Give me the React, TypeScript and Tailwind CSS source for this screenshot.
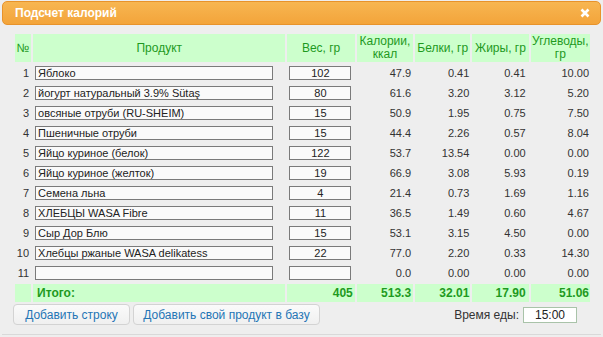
import React from "react";

const rows = [
  { n: 1, name: "Яблоко", w: "102", kcal: "47.9", p: "0.41", f: "0.41", c: "10.00" },
  { n: 2, name: "йогурт натуральный 3.9% Sütaş", w: "80", kcal: "61.6", p: "3.20", f: "3.12", c: "5.20" },
  { n: 3, name: "овсяные отруби (RU-SHEIM)", w: "15", kcal: "50.9", p: "1.95", f: "0.75", c: "7.50" },
  { n: 4, name: "Пшеничные отруби", w: "15", kcal: "44.4", p: "2.26", f: "0.57", c: "8.04" },
  { n: 5, name: "Яйцо куриное (белок)", w: "122", kcal: "53.7", p: "13.54", f: "0.00", c: "0.00" },
  { n: 6, name: "Яйцо куриное (желток)", w: "19", kcal: "66.9", p: "3.08", f: "5.93", c: "0.19" },
  { n: 7, name: "Семена льна", w: "4", kcal: "21.4", p: "0.73", f: "1.69", c: "1.16" },
  { n: 8, name: "ХЛЕБЦЫ WASA Fibre", w: "11", kcal: "36.5", p: "1.49", f: "0.60", c: "4.67" },
  { n: 9, name: "Сыр Дор Блю", w: "15", kcal: "53.1", p: "3.15", f: "4.50", c: "0.00" },
  { n: 10, name: "Хлебцы ржаные WASA delikatess", w: "22", kcal: "77.0", p: "2.20", f: "0.33", c: "14.30" },
  { n: 11, name: "", w: "", kcal: "0.0", p: "0.00", f: "0.00", c: "0.00" },
];

const head = "bg-[#ccffcc] text-[#1e9a1e] text-[12px] leading-[13px] font-normal text-center p-0";

export default function App() {
  return (
    <div
      className="w-[603px] h-[337px] bg-[#eeeeee] relative overflow-hidden text-[#333]"
      style={{ fontFamily: '"Liberation Sans", Arial, sans-serif' }}
    >
      <div className="pt-px px-[2px]">
        <div className="h-[24px] rounded-[5px] border border-[#e8932b] bg-gradient-to-b from-[#f7b651] to-[#f3a43a] flex items-center justify-between pl-[12px] pr-[10px]">
          <span className="text-white font-bold text-[12px]">Подсчет калорий</span>
          <svg width="10" height="10" viewBox="0 0 10 10">
            <path d="M1.5 1.5 L8.5 8.5 M8.5 1.5 L1.5 8.5" stroke="#fff" strokeWidth="2.6" strokeLinecap="butt" />
          </svg>
        </div>
      </div>
      <div className="pl-[13px] pt-[7px]">
        <table className="border-separate border-spacing-[2px] table-fixed text-[11px]" style={{ width: 579 }}>
          <colgroup>
            <col style={{ width: 16 }} />
            <col style={{ width: 251 }} />
            <col style={{ width: 67 }} />
            <col style={{ width: 56 }} />
            <col style={{ width: 55 }} />
            <col style={{ width: 56 }} />
            <col style={{ width: 59 }} />
          </colgroup>
          <thead>
            <tr className="h-[28px]">
              <th className={head}>№</th>
              <th className={head}>Продукт</th>
              <th className={head}>Вес, гр</th>
              <th className={head}>Калории,<br />ккал</th>
              <th className={head}>Белки, гр</th>
              <th className={head}>Жиры, гр</th>
              <th className={head}>Углеводы,<br />гр</th>
            </tr>
          </thead>
          <tbody>
            {rows.map((r) => (
              <tr key={r.n} className="h-[18px]">
                <td className="p-0 pr-[2px] text-right text-[#333]">{r.n}</td>
                <td className="p-0 pl-[2px]">
                  <div className="h-[14px] w-[238px] border border-[#7a7a7a] bg-[#fafafa] text-[11px] leading-[12px] pl-[2px] text-[#222] whitespace-nowrap overflow-hidden">
                    {r.name}
                  </div>
                </td>
                <td className="p-0 pl-[2px]">
                  <div className="h-[14px] w-[62px] border border-[#7a7a7a] bg-[#fafafa] text-[11px] leading-[12px] text-center text-[#222]">
                    {r.w}
                  </div>
                </td>
                <td className="p-0 pr-[2px] text-right">{r.kcal}</td>
                <td className="p-0 pr-[1px] text-right">{r.p}</td>
                <td className="p-0 pr-[3px] text-right">{r.f}</td>
                <td className="p-0 pr-[1px] text-right">{r.c}</td>
              </tr>
            ))}
            <tr className="h-[17px] text-[#1e9a1e] font-bold text-[12px]">
              <td className="bg-[#ccffcc] p-0"></td>
              <td className="bg-[#ccffcc] p-0 pl-[4px]">Итого:</td>
              <td className="bg-[#ccffcc] p-0 pr-[2px] text-right">405</td>
              <td className="bg-[#ccffcc] p-0 pr-[2px] text-right">513.3</td>
              <td className="bg-[#ccffcc] p-0 pr-[1px] text-right">32.01</td>
              <td className="bg-[#ccffcc] p-0 pr-[3px] text-right">17.90</td>
              <td className="bg-[#ccffcc] p-0 pr-[1px] text-right">51.06</td>
            </tr>
          </tbody>
        </table>
      </div>
      <div className="flex items-center pl-[13px] pr-[26px]">
        <button className="h-[21px] w-[117px] rounded-[4px] border border-[#d3d3d3] bg-gradient-to-b from-[#fafafa] to-[#f0f0f0] text-[#2475b5] text-[12px]">
          Добавить строку
        </button>
        <button className="ml-[3px] h-[21px] w-[187px] rounded-[4px] border border-[#d3d3d3] bg-gradient-to-b from-[#fafafa] to-[#f0f0f0] text-[#2475b5] text-[12px]">
          Добавить свой продукт в базу
        </button>
        <div className="ml-auto flex items-center">
          <span className="text-[12px] text-[#333] mr-[4px]">Время еды:</span>
          <div className="h-[16px] w-[54px] border border-[#a9c3a9] bg-white text-[12px] leading-[14px] text-center text-[#222]">
            15:00
          </div>
        </div>
      </div>
      <div className="absolute left-[2px] right-[2px] top-[334px] h-px bg-[#d9d9d9]" />
    </div>
  );
}
